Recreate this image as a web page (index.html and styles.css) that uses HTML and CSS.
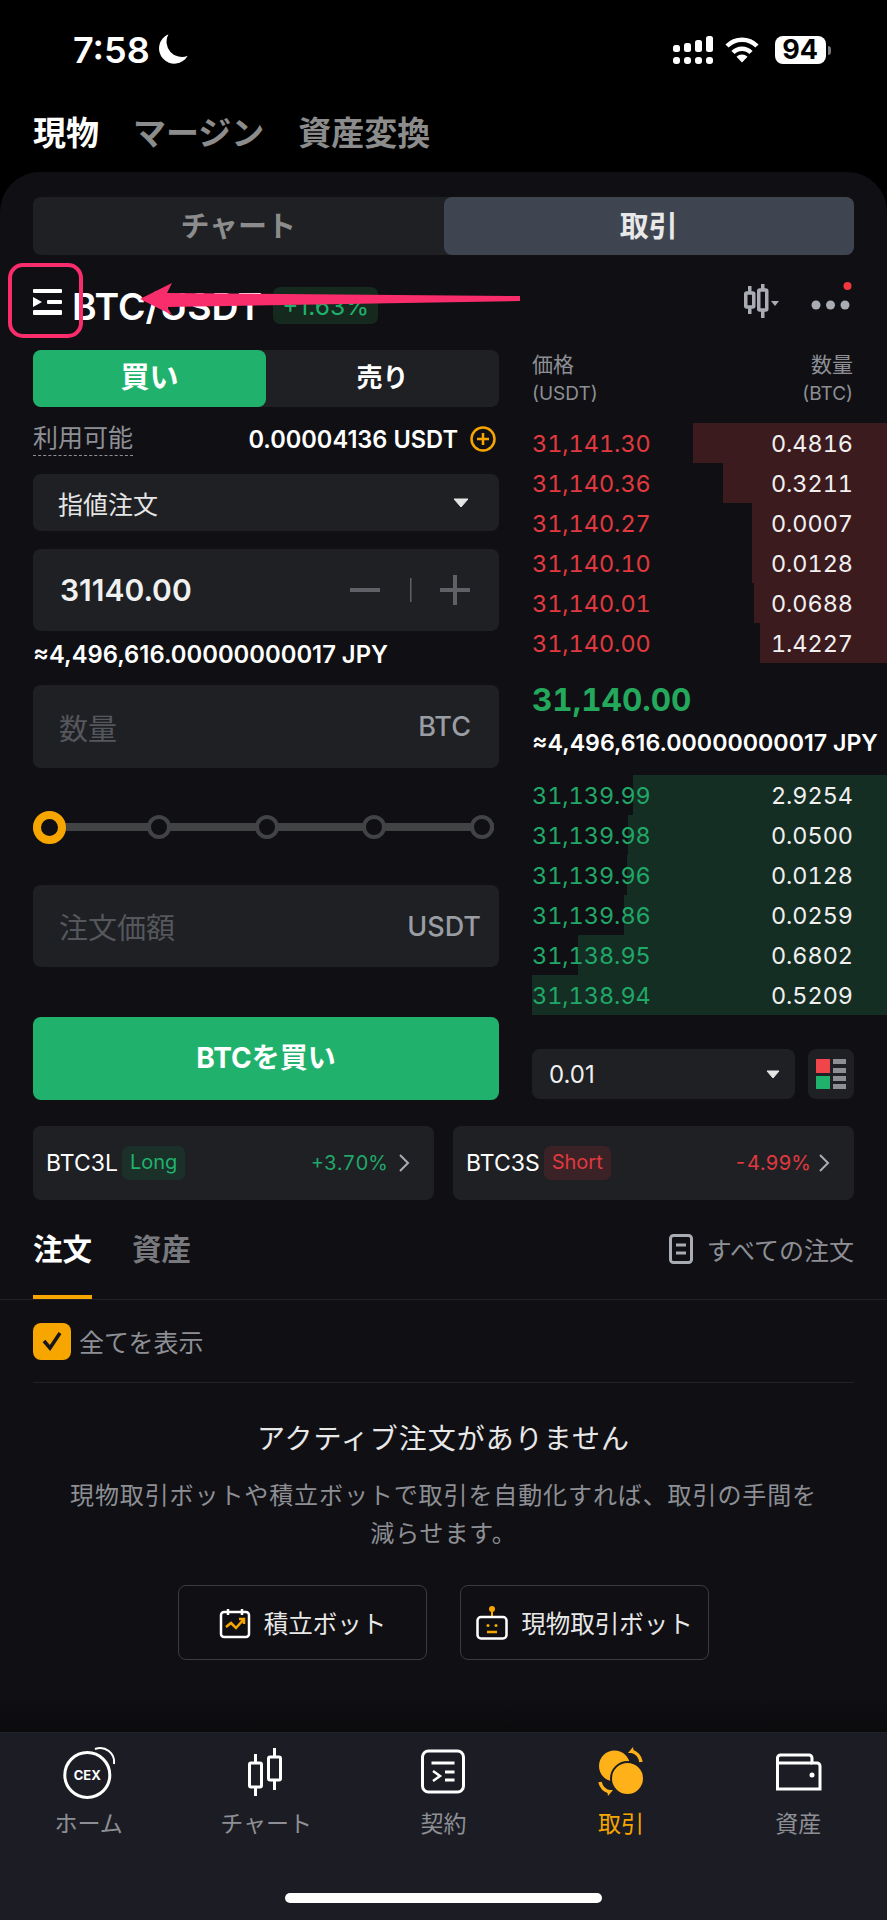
FILE: index.html
```html
<!DOCTYPE html>
<html lang="ja">
<head>
    <meta charset="UTF-8">
    <meta name="viewport" content="width=device-width, initial-scale=1.0">
    <title>現物取引</title>
    <link rel="stylesheet" href="styles.css">
</head>
<body>
    <div class="phone">
        <div class="status">
            <span class="time">7:58</span>
            <svg class="moon" width="34" height="34" viewBox="0 0 30 30"><path d="M11 2 A13.5 13.5 0 0 0 28 21 A13.5 13.5 0 1 1 11 2 Z" fill="#fff"/></svg>
            <svg class="signal" width="40" height="28" viewBox="0 0 40 28" fill="#fff">
                <rect x="0" y="9" width="7" height="7" rx="2.5"/><rect x="11" y="7" width="7" height="9" rx="2.5"/><rect x="22" y="4" width="7" height="12" rx="2.5"/><rect x="33" y="0" width="7" height="16" rx="2.5"/>
                <rect x="0" y="21" width="7" height="7" rx="3"/><rect x="11" y="21" width="7" height="7" rx="3"/><rect x="22" y="21" width="7" height="7" rx="3"/><rect x="33" y="21" width="7" height="7" rx="3"/>
            </svg>
            <svg class="wifi" width="34" height="26" viewBox="0 0 34 26" fill="none" stroke="#fff" stroke-width="4.5">
                <path d="M2 9 A21 21 0 0 1 32 9"/><path d="M8 15.5 A12.5 12.5 0 0 1 26 15.5"/><path d="M17 25.5 L11.5 19.8 A8 8 0 0 1 22.5 19.8 Z" fill="#fff" stroke="none"/>
            </svg>
            <span class="battery">94</span>
            <span class="battery-nub"></span>
        </div>

        <div class="top-tabs">
            <span class="top-tab on">現物</span>
            <span class="top-tab">マージン</span>
            <span class="top-tab">資産変換</span>
        </div>

        <div class="card">
            <div class="seg">
                <div class="seg-item">チャート</div>
                <div class="seg-item on">取引</div>
            </div>

            <div class="pair">
                <svg class="pair-menu" width="29" height="27" viewBox="0 0 29 27" fill="#fff">
                    <rect x="0" y="0" width="29" height="4" rx="1"/>
                    <path d="M0 8 L9 13 L0 18 Z"/>
                    <rect x="14" y="11" width="15" height="4" rx="1"/>
                    <rect x="0" y="21" width="29" height="5" rx="1"/>
                </svg>
                <span class="pair-name">BTC/USDT</span>
                <span class="pair-change">+1.63%</span>
                <svg class="pair-tools" width="110" height="40" viewBox="0 0 110 40">
                    <g fill="none" stroke="#a9adb3" stroke-width="3.500">
                        <rect x="1.750" y="11" width="8" height="14" rx="1"/>
                        <rect x="14.750" y="8" width="8" height="20" rx="1"/>
                        <path d="M5.750 4 V11 M5.750 25 V32 M18.750 2 V8 M18.750 28 V36"/>
                    </g>
                    <path d="M27 19 H35 L31 24 Z" fill="#a9adb3"/>
                    <circle cx="72" cy="23" r="4.500" fill="#a9adb3"/>
                    <circle cx="86.500" cy="23" r="4.500" fill="#a9adb3"/>
                    <circle cx="101" cy="23" r="4.500" fill="#a9adb3"/>
                    <circle cx="103.500" cy="4" r="4" fill="#f0373e"/>
                </svg>
            </div>

            <div class="trade">
                <div class="form">
                    <div class="side">
                        <div class="side-item buy">買い</div>
                        <div class="side-item">売り</div>
                    </div>
                    <div class="avail">
                        <span class="avail-label">利用可能</span>
                        <span class="avail-value">0.00004136 USDT</span>
                        <svg width="26" height="26" viewBox="0 0 26 26" fill="none" stroke="#f7a600" stroke-width="2.500"><circle cx="13" cy="13" r="11.500"/><path d="M7 13 H19 M13 7 V19"/></svg>
                    </div>
                    <div class="field select">
                        <span>指値注文</span>
                        <svg width="16" height="10" viewBox="0 0 16 10"><path d="M1 1 H15 L8 9 Z" fill="#e5e5e5" stroke="#e5e5e5" stroke-linejoin="round"/></svg>
                    </div>
                    <div class="field price">
                        <span class="price-value">31140.00</span>
                        <svg width="120" height="30" viewBox="0 0 120 30" fill="#5f6166">
                            <rect x="0" y="13" width="30" height="4"/>
                            <rect x="60" y="3" width="1.500" height="24"/>
                            <rect x="90" y="13" width="30" height="4"/>
                            <rect x="103" y="0" width="4" height="30"/>
                        </svg>
                    </div>
                    <div class="approx">≈4,496,616.00000000017 JPY</div>
                    <div class="field amount">
                        <span class="placeholder">数量</span>
                        <span class="unit">BTC</span>
                    </div>
                    <div class="slider">
                        <span class="handle"></span>
                        <span class="node"></span>
                        <span class="node"></span>
                        <span class="node"></span>
                        <span class="node"></span>
                    </div>
                    <div class="field amount order-price">
                        <span class="placeholder">注文価額</span>
                        <span class="unit">USDT</span>
                    </div>
                    <div class="buy-btn">BTCを買い</div>
                </div>

                <div class="book">
                    <div class="book-head">
                        <div><div>価格</div><div class="small">(USDT)</div></div>
                        <div class="right"><div>数量</div><div class="small">(BTC)</div></div>
                    </div>
                    <div class="asks">
                        <div class="row" style="--w:194px"><span class="px">31,141.30</span><span>0.4816</span></div>
                        <div class="row" style="--w:164px"><span class="px">31,140.36</span><span>0.3211</span></div>
                        <div class="row" style="--w:135px"><span class="px">31,140.27</span><span>0.0007</span></div>
                        <div class="row" style="--w:135px"><span class="px">31,140.10</span><span>0.0128</span></div>
                        <div class="row" style="--w:133px"><span class="px">31,140.01</span><span>0.0688</span></div>
                        <div class="row" style="--w:127px"><span class="px">31,140.00</span><span>1.4227</span></div>
                    </div>
                    <div class="last">31,140.00</div>
                    <div class="last-jpy">≈4,496,616.00000000017 JPY</div>
                    <div class="bids">
                        <div class="row" style="--w:254px"><span class="px">31,139.99</span><span>2.9254</span></div>
                        <div class="row" style="--w:259px"><span class="px">31,139.98</span><span>0.0500</span></div>
                        <div class="row" style="--w:260px"><span class="px">31,139.96</span><span>0.0128</span></div>
                        <div class="row" style="--w:263px"><span class="px">31,139.86</span><span>0.0259</span></div>
                        <div class="row" style="--w:309px"><span class="px">31,138.95</span><span>0.6802</span></div>
                        <div class="row" style="--w:355px"><span class="px">31,138.94</span><span>0.5209</span></div>
                    </div>
                    <div class="depth">
                        <div class="depth-select">
                            <span>0.01</span>
                            <svg width="14" height="9" viewBox="0 0 14 9"><path d="M1 1 H13 L7 8 Z" fill="#e5e5e5" stroke="#e5e5e5" stroke-linejoin="round"/></svg>
                        </div>
                        <div class="depth-toggle">
                            <svg width="30" height="30" viewBox="0 0 30 30">
                                <rect x="0" y="0" width="14" height="14" fill="#f0454b"/>
                                <rect x="0" y="17" width="14" height="13" fill="#20b26c"/>
                                <g fill="#8d8f94">
                                    <rect x="17" y="0" width="13" height="5"/><rect x="17" y="9" width="13" height="5"/>
                                    <rect x="17" y="17" width="13" height="5"/><rect x="17" y="25" width="13" height="5"/>
                                </g>
                            </svg>
                        </div>
                    </div>
                </div>
            </div>

            <div class="chips">
                <div class="chip">
                    <span class="chip-name">BTC3L</span>
                    <span class="tag long">Long</span>
                    <span class="chip-pct up">+3.70%</span>
                    <svg width="12" height="20" viewBox="0 0 12 20" fill="none" stroke="#a9adb3" stroke-width="2"><path d="M2 2 L10 10 L2 18"/></svg>
                </div>
                <div class="chip">
                    <span class="chip-name">BTC3S</span>
                    <span class="tag short">Short</span>
                    <span class="chip-pct down">-4.99%</span>
                    <svg width="12" height="20" viewBox="0 0 12 20" fill="none" stroke="#a9adb3" stroke-width="2"><path d="M2 2 L10 10 L2 18"/></svg>
                </div>
            </div>

            <div class="order-tabs">
                <div class="order-tab on">注文</div>
                <div class="order-tab">資産</div>
                <div class="all-orders">
                    <svg width="24" height="30" viewBox="0 0 24 30" fill="none" stroke="#a9adb3" stroke-width="3"><rect x="1.500" y="1.500" width="21" height="27" rx="3"/><path d="M7 11 H17 M7 19 H17"/></svg>
                    <span>すべての注文</span>
                </div>
            </div>

            <div class="show-all">
                <span class="check">
                    <svg width="24" height="22" viewBox="0 0 24 22" fill="none" stroke="#15151a" stroke-width="3.500"><path d="M4 11 L10 18 L20 3"/></svg>
                </span>
                <span>全てを表示</span>
            </div>

            <div class="empty">
                <div class="empty-title">アクティブ注文がありません</div>
                <p class="empty-text">現物取引ボットや積立ボットで取引を自動化すれば、取引の手間を減らせます。</p>
                <div class="empty-btns">
                    <div class="bot-btn">
                        <svg width="32" height="32" viewBox="0 0 32 32" fill="none">
                            <path d="M9 2 V8 M23 2 V8" stroke="#fff" stroke-width="2.500"/>
                            <rect x="2" y="5" width="28" height="25" rx="3" stroke="#fff" stroke-width="2.500"/>
                            <path d="M7 20 L12 16 L17 21 L25 12 M20 12 H25 V17" stroke="#f7a600" stroke-width="2.500"/>
                        </svg>
                        <span>積立ボット</span>
                    </div>
                    <div class="bot-btn">
                        <svg width="32" height="34" viewBox="0 0 32 34" fill="none">
                            <circle cx="16" cy="3" r="3" fill="#f7a600"/>
                            <path d="M16 5 V11" stroke="#f7a600" stroke-width="2"/>
                            <rect x="1.500" y="11" width="29" height="21.500" rx="3.500" stroke="#fff" stroke-width="2.500"/>
                            <path d="M11 26 H21" stroke="#f7a600" stroke-width="2.500"/>
                            <circle cx="12" cy="19.500" r="1.500" fill="#f7a600"/>
                            <circle cx="20" cy="19.500" r="1.500" fill="#f7a600"/>
                        </svg>
                        <span>現物取引ボット</span>
                    </div>
                </div>
            </div>
        </div>

        <div class="nav">
            <div class="nav-item">
                <svg width="60" height="56" viewBox="0 0 60 56" fill="none" stroke="#fff" stroke-width="3">
                    <circle cx="28.300" cy="31" r="22.500"/>
                    <path d="M36 5 A14 14 0 0 1 55 20" stroke-width="2"/>
                    <text class="cex" x="28.300" y="36" text-anchor="middle">CEX</text>
                </svg>
                <span>ホーム</span>
            </div>
            <div class="nav-item">
                <svg width="60" height="56" viewBox="0 0 60 56" fill="none" stroke="#fff" stroke-width="3">
                    <rect x="13.500" y="19" width="12" height="24" rx="1.500"/>
                    <path d="M19.500 10 V19 M19.500 43 V52"/>
                    <rect x="32.500" y="13" width="12" height="23" rx="1.500"/>
                    <path d="M38.500 4 V13 M38.500 36 V46"/>
                </svg>
                <span>チャート</span>
            </div>
            <div class="nav-item">
                <svg width="60" height="56" viewBox="0 0 60 56" fill="none" stroke="#fff" stroke-width="3">
                    <rect x="9.500" y="7" width="41" height="41" rx="6"/>
                    <path d="M18.500 19 H41.500 M32 28 H41.500 M32 36 H41.500"/>
                    <path d="M20 27 L27 32 L20 37" stroke-width="2.500"/>
                </svg>
                <span>契約</span>
            </div>
            <div class="nav-item on">
                <svg width="60" height="56" viewBox="0 0 60 56" fill="none">
                    <circle cx="23.500" cy="22" r="15.500" fill="#ffb11a"/>
                    <circle cx="36.500" cy="34.500" r="16.500" fill="#ffb11a" stroke="#1c1d24" stroke-width="2"/>
                    <path d="M40 7 A13 13 0 0 1 50 18 M9 38 A13 13 0 0 0 19 48" stroke="#ffb11a" stroke-width="3.500"/>
                    <path d="M37 9 L42 3 L43 9 Z M22 46 L17 52 L16 46 Z" fill="#ffb11a"/>
                </svg>
                <span>取引</span>
            </div>
            <div class="nav-item">
                <svg width="60" height="56" viewBox="0 0 60 56" fill="none" stroke="#fff" stroke-width="3">
                    <path d="M9.500 45 V14 a3 3 0 0 1 3-3 H41 a3 3 0 0 1 3 3 V19 H49 a3 3 0 0 1 3 3 V45 Z"/>
                    <path d="M9.500 19 H44"/>
                    <circle cx="44" cy="31" r="2.500" fill="#fff" stroke="none"/>
                </svg>
                <span>資産</span>
            </div>
            <div class="home-bar"></div>
        </div>

        <!-- annotation drawn on top of the screenshot -->
        <div class="mark-box"></div>
        <svg class="mark-arrow" width="400" height="50" viewBox="130 275 400 50"><path d="M140 299 L172 283 L167 293 L520 296 V301 L167 307 L172 315 Z" fill="#fa2d6c"/></svg>
    </div>
</body>
</html>
```

FILE: styles.css
```css
*{
    box-sizing: border-box;
}

body{
    margin:0;
    padding:0;
    background-color: black;
    font-family: Inter, "Noto Sans CJK JP", "Noto Sans", sans-serif;
    color: #fff;
}

.phone{
    position: relative;
    width:887px;
    height:1920px;
    display: flex;
    flex-direction: column;
    overflow: hidden;
    background-color: black;
}

/* status bar */
.status{
    height:100px;
    flex: none;
    display: flex;
    align-items: center;
    padding-left:73px;
}

.time{
    font-size:36px;
    font-weight:600;
    line-height:44px;
}

.moon{
    margin-left:6px;
    margin-top:-2px;
}

.signal{
    margin-left:483px;
}

.wifi{
    margin-left:12px;
}

.battery{
    margin-left:16px;
    width:51px;
    height:28px;
    border-radius:8px;
    background-color: white;
    color: black;
    font-size:27px;
    font-weight:700;
    line-height:28px;
    text-align: center;
}

.battery-nub{
    width:3px;
    height:9px;
    margin-left:2px;
    border-radius:0 3px 3px 0;
    background-color: #777;
}

/* top tabs */
.top-tabs{
    height:72px;
    flex: none;
    display: flex;
    gap:34px;
    padding:11px 0 0 33px;
}

.top-tab{
    font-size:33px;
    font-weight:600;
    line-height:44px;
    color: #8c8c8c;
}

.top-tab.on{
    color: #fff;
}

/* main card */
.card{
    flex: 1;
    min-height: 0;
    border-radius:40px 40px 0 0;
    background: linear-gradient(#101014 calc(100% - 36px), #0b0b0e);
    padding-top:25px;
}

.seg{
    display: flex;
    height:58px;
    margin:0 33px;
    border-radius:8px;
    background-color: #1e2024;
}

.seg-item{
    flex: 1;
    border-radius:8px;
    text-align: center;
    font-size:29px;
    font-weight:600;
    line-height:60px;
    color: #8c8c8c;
}

.seg-item.on{
    background-color: #3e4550;
    color: #e8e8e8;
}

.pair{
    height:95px;
    display: flex;
    align-items: center;
    padding-left:33px;
}

.pair-name{
    margin-left:10px;
    margin-top:8px;
    font-size:37.400px;
    font-weight:600;
    line-height:44px;
}

.pair-change{
    margin-left:11px;
    margin-top:6px;
    height:37px;
    padding:0 9px;
    border-radius:7px;
    background-color: #16291f;
    color: #20b26c;
    font-size:24.500px;
    line-height:39px;
}

.pair-tools{
    margin-left:auto;
    margin-right:33px;
    margin-top:-2px;
}

.trade{
    display: grid;
    grid-template-columns: 466px 1fr;
    column-gap:33px;
    padding-left:33px;
}

/* order form */
.side{
    display: flex;
    height:57px;
    border-radius:8px;
    background-color: #1e2024;
}

.side-item{
    flex: 1;
    border-radius:8px;
    text-align: center;
    font-size:26px;
    font-weight:700;
    line-height:56px;
}

.side-item.buy{
    background-color: #20b26c;
    font-size:29px;
}

.avail{
    height:34px;
    margin-top:15px;
    display: flex;
    align-items: center;
}

.avail-label{
    font-size:25px;
    line-height:33px;
    color: #8d8f94;
    border-bottom:1px dashed #8d8f94;
}

.avail-value{
    margin-left:auto;
    margin-right:12px;
    font-size:23.600px;
    font-weight:600;
}

.avail svg{
    margin-right:3px;
}

.field{
    display: flex;
    justify-content: space-between;
    align-items: center;
    border-radius:8px;
    background-color: #1e2024;
}

.select{
    height:57px;
    margin-top:18px;
    padding:0 30px 0 25px;
    font-size:25px;
    color: #e5e5e5;
}

.price{
    height:82px;
    margin-top:18px;
    padding:0 29px 0 27px;
}

.price-value{
    font-size:30px;
    font-weight:600;
    color: #f0f0f0;
}

.approx{
    height:28px;
    margin-top:9px;
    font-size:23.800px;
    font-weight:600;
    line-height:30px;
    white-space: nowrap;
}

.amount{
    height:83px;
    margin-top:17px;
    padding:0 28px 0 26px;
}

.placeholder{
    font-size:29px;
    color: #55575c;
}

.unit{
    font-size:27px;
    font-weight:500;
    color: #9a9da3;
}

.slider{
    display: flex;
    justify-content: space-between;
    align-items: center;
    height:40px;
    margin:39px 5px 0 0;
    background: linear-gradient(#414345, #414345) center / 100% 8px no-repeat;
}

.handle{
    width:33px;
    height:33px;
    margin-right:-3px;
    border:8px solid #f7a600;
    border-radius:50%;
    background-color: #101014;
}

.node{
    width:24px;
    height:24px;
    border:4px solid #414345;
    border-radius:50%;
    background-color: #101014;
}

.order-price{
    height:82px;
    margin-top:38px;
    padding-right:18px;
}

.buy-btn{
    height:83px;
    margin-top:50px;
    border-radius:8px;
    background-color: #20b26c;
    text-align: center;
    font-size:28px;
    font-weight:700;
    line-height:82px;
}

/* order book */
.book-head{
    display: flex;
    justify-content: space-between;
    padding-right:34px;
    margin-bottom:15px;
    font-size:21px;
    line-height:29px;
    color: #8d8f94;
}

.book-head .small{
    font-size:19px;
}

.book-head .right{
    text-align: right;
}

.row{
    display: flex;
    justify-content: space-between;
    height:40px;
    padding-right:34px;
    font-size:23.400px;
    font-variant-numeric: tabular-nums;
    line-height:42px;
    color: #f0f0f0;
}

.asks .row{
    background: linear-gradient(to left, #3c1b1f var(--w), transparent var(--w));
}

.asks .px{
    color: #e0393f;
}

.bids .row{
    background: linear-gradient(to left, #152e24 var(--w), transparent var(--w));
}

.bids .px{
    color: #20a868;
}

.last{
    height:38px;
    margin-top:18px;
    font-size:31.500px;
    font-weight:700;
    font-variant-numeric: tabular-nums;
    line-height:38px;
    color: #23a85c;
}

.last-jpy{
    height:28px;
    margin:10px 0 18px;
    font-size:23.200px;
    font-weight:600;
    line-height:28px;
    white-space: nowrap;
}

.depth{
    display: flex;
    gap:13px;
    height:50px;
    margin-top:34px;
    padding-right:33px;
}

.depth-select{
    flex: 1;
    display: flex;
    justify-content: space-between;
    align-items: center;
    padding:0 15px 0 17px;
    border-radius:8px;
    background-color: #1e2024;
    font-size:24px;
    color: #f0f0f0;
}

.depth-toggle{
    width:46px;
    display: flex;
    justify-content: center;
    align-items: center;
    border-radius:8px;
    background-color: #1e2024;
}

/* long / short chips */
.chips{
    display: grid;
    grid-template-columns: 1fr 1fr;
    gap:19px;
    margin-top:26px;
    padding:0 33px;
}

.chip{
    height:74px;
    display: flex;
    align-items: center;
    padding:0 24px 0 13px;
    border-radius:8px;
    background-color: #1e2024;
    font-size:23px;
}

.tag{
    margin-left:4px;
    height:34px;
    padding:0 8px;
    border-radius:7px;
    font-size:20px;
    line-height:32px;
}

.long{
    background-color: #1a3029;
    color: #20b26c;
}

.short{
    background-color: #3b2226;
    color: #e0393f;
}

.chip-pct{
    margin-left:auto;
    font-size:20px;
    font-variant-numeric: tabular-nums;
}

.up{
    margin-right:10px;
    color: #20a868;
}

.down{
    margin-right:7px;
    color: #e0393f;
}

/* orders */
.order-tabs{
    display: flex;
    gap:40px;
    height:100px;
    padding:0 33px;
    border-bottom:1px solid #202226;
}

.order-tab{
    height:99px;
    padding-top:29px;
    border-bottom:4px solid transparent;
    font-size:29.500px;
    font-weight:600;
    line-height:40px;
    color: #77797e;
}

.order-tab.on{
    border-bottom-color: #f7a600;
    color: #fff;
}

.all-orders{
    margin-left:auto;
    display: flex;
    align-items: center;
    gap:14px;
    height:40px;
    margin-top:29px;
    font-size:25px;
    color: #8d8f94;
}

.show-all{
    height:83px;
    margin:0 33px;
    display: flex;
    align-items: center;
    gap:8px;
    border-bottom:1px solid #202226;
    font-size:25px;
    color: #8d8f94;
}

.check{
    width:38px;
    height:37px;
    display: flex;
    justify-content: center;
    align-items: center;
    border-radius:8px;
    background-color: #f7a600;
}

.empty{
    text-align: center;
}

.empty-title{
    margin-top:36px;
    font-size:28px;
    letter-spacing:1px;
    line-height:40px;
    color: #e8e8e8;
}

.empty-text{
    margin:18px 0 0;
    padding:0 60px;
    font-size:24px;
    letter-spacing:0.900px;
    line-height:38px;
    color: #8d8f94;
}

.empty-btns{
    display: flex;
    justify-content: center;
    gap:33px;
    margin-top:32px;
}

.bot-btn{
    width:249px;
    height:75px;
    display: flex;
    justify-content: center;
    align-items: center;
    gap:13px;
    border:1px solid #3a3c40;
    border-radius:8px;
    font-size:24.500px;
    color: #e8e8e8;
    white-space: nowrap;
}

/* bottom nav */
.nav{
    flex: none;
    height:188px;
    display: grid;
    grid-template-columns: repeat(5, 1fr);
    grid-template-rows: 100px 1fr;
    padding-top:11px;
    border-top:1px solid #23242b;
    background-color: #1c1d24;
}

.nav-item{
    display: flex;
    flex-direction: column;
    align-items: center;
    font-size:23px;
    line-height:30px;
    color: #8d8f94;
}

.nav-item svg{
    flex: none;
}

.nav-item.on{
    color: #f7a600;
}

.nav-item span{
    margin-top:9px;
}

.cex{
    fill: #fff;
    stroke: none;
    font-size:13px;
    font-weight:700;
}

.home-bar{
    grid-column: 1 / -1;
    justify-self: center;
    align-self: end;
    width:317px;
    height:10px;
    margin-bottom:17px;
    border-radius:5px;
    background-color: white;
}

/* annotation overlay */
.mark-box{
    position: absolute;
    left:8px;
    top:263px;
    width:75px;
    height:75px;
    border:4px solid #fa2d6c;
    border-radius:15px;
}

.mark-arrow{
    position: absolute;
    left:130px;
    top:275px;
}
```
